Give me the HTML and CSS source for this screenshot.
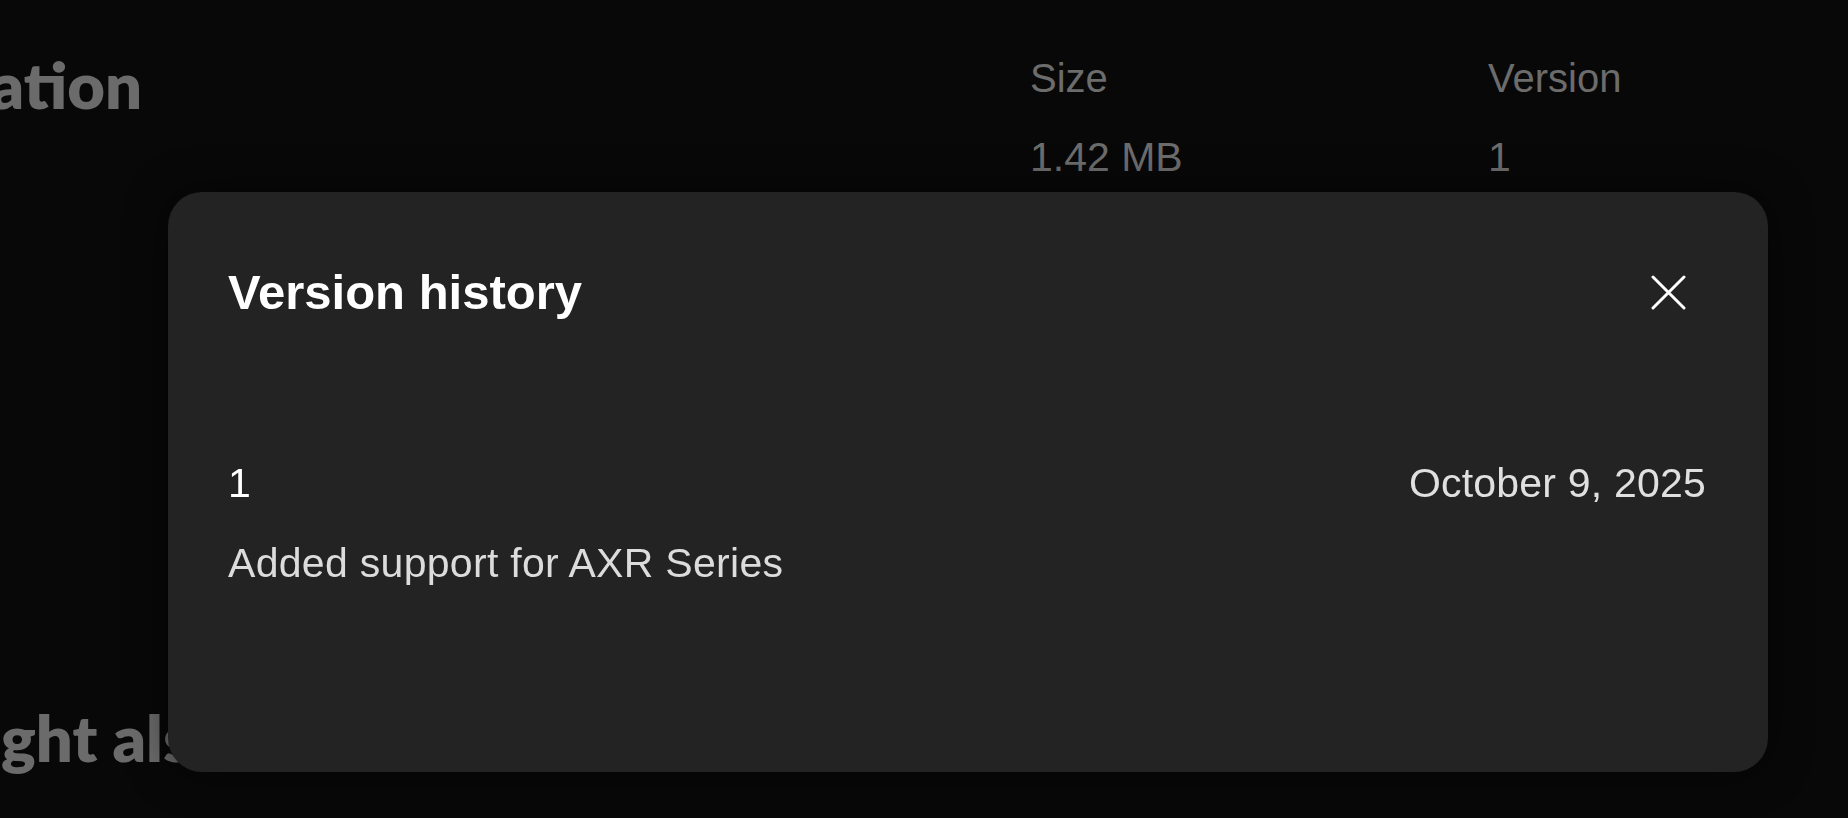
FILE: index.html
```html
<!DOCTYPE html>
<html lang="en">
<head>
<meta charset="utf-8">
<title>Version history</title>
<link rel="stylesheet" href="styles.css">
</head>
<body>
<div class="page">
  <div class="info-row">
    <div class="cut-heading"><h2 class="section-title">Information</h2></div>
    <dl class="meta">
      <div class="meta-col">
        <dt>Size</dt>
        <dd>1.42 MB</dd>
      </div>
      <div class="meta-col">
        <dt>Version</dt>
        <dd>1</dd>
      </div>
    </dl>
  </div>
  <h2 class="section-title also"><span class="lead"><span>You mi</span></span>ght also like</h2>
</div>

<div class="overlay">
  <div class="modal" role="dialog" aria-label="Version history">
    <div class="modal-header">
      <h1 class="modal-title">Version history</h1>
      <button class="close" aria-label="Close">
        <svg width="35" height="35" viewBox="0 0 35 35" aria-hidden="true">
          <path d="M2 2 L33 33 M33 2 L2 33" stroke="#fff" stroke-width="3" stroke-linecap="round" fill="none"/>
        </svg>
      </button>
    </div>
    <div class="entry">
      <div class="entry-top">
        <span class="entry-version">1</span>
        <span class="entry-date">October 9, 2025</span>
      </div>
      <p class="entry-note">Added support for AXR Series</p>
    </div>
  </div>
</div>
</body>
</html>
```

FILE: styles.css
```css
html, body {
  margin: 0;
  padding: 0;
  background: #080808;
  height: 100%;
  overflow: hidden;
}

body {
  font-family: "Liberation Sans", Arial, sans-serif;
  color: #ddd;
}

.page {
  position: relative;
  height: 818px;
}

.info-row {
  display: flex;
  align-items: flex-start;
  padding-top: 52px;
}

.cut-heading {
  width: 142px;
  flex-shrink: 0;
  display: flex;
  justify-content: flex-end;
}

.section-title {
  margin: 0;
  font-family: Lato, "Liberation Sans", sans-serif;
  font-weight: 800;
  font-size: 65px;
  line-height: 65px;
  color: #6b6b6b;
  white-space: nowrap;
  flex-shrink: 0;
}

.meta {
  margin: 2px 0 0 888px;
  display: flex;
}

.meta-col {
  width: 458px;
  display: flex;
  flex-direction: column;
  gap: 31px;
}

.meta dt,
.meta dd {
  margin: 0;
  font-size: 40px;
  line-height: 48px;
  color: #6c6c6c;
}

.meta dd {
  font-size: 41px;
}

.also {
  margin-top: 524px;
  display: flex;
}

.lead {
  width: 1px;
  display: flex;
  justify-content: flex-end;
  flex-shrink: 0;
}

.lead span {
  flex-shrink: 0;
  white-space: pre;
}

.overlay {
  position: fixed;
  inset: 0;
  padding: 192px 0 0 168px;
}

.modal {
  width: 1600px;
  height: 580px;
  box-sizing: border-box;
  padding: 60px;
  background: #232323;
  border-radius: 34px;
  box-shadow: 0 0 40px rgba(0, 0, 0, 0.55);
}

.modal-header {
  height: 80px;
  display: flex;
  align-items: center;
  justify-content: space-between;
}

.modal-title {
  margin: 0;
  font-size: 49px;
  line-height: 1.2;
  font-weight: 700;
  color: #fff;
}

.close {
  width: 80px;
  height: 80px;
  padding: 0;
  border: 0;
  background: transparent;
  display: flex;
  align-items: center;
  justify-content: center;
}

.entry {
  margin-top: 127px;
}

.entry-top {
  display: flex;
  justify-content: space-between;
  align-items: baseline;
  padding-right: 2px;
}

.entry-version {
  font-size: 41px;
  line-height: 48px;
  color: #fff;
}

.entry-date {
  font-size: 41px;
  line-height: 48px;
  color: #e0e0e0;
  letter-spacing: 0.2px;
}

.entry-note {
  margin: 32px 0 0;
  font-size: 41px;
  line-height: 48px;
  color: #dcdcdc;
  letter-spacing: 0.3px;
}
```
